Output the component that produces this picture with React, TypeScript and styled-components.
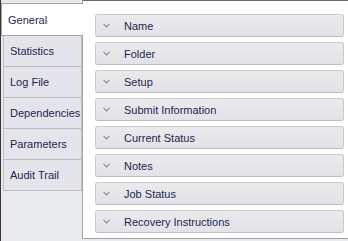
import React from 'react';
import styled, { createGlobalStyle } from 'styled-components';

const GlobalStyle = createGlobalStyle`
  html, body {
    margin: 0;
    padding: 0;
    background: #e9eaee;
    font-family: "Liberation Sans", Arial, sans-serif;
  }
`;

const Window = styled.div`
  display: flex;
  height: 241px;
  width: 348px;
  border-left: 1px solid #3e3434;
  box-sizing: border-box;
  overflow: hidden;
`;

const TabStrip = styled.div`
  width: 81px;
  padding-top: 3px;
  display: flex;
  flex-direction: column;
  flex-shrink: 0;
`;

const Tab = styled.div<{ $active?: boolean }>`
  position: relative;
  box-sizing: border-box;
  height: ${p => (p.$active ? 33 : 31)}px;
  margin-left: ${p => (p.$active ? 0 : 2)}px;
  margin-right: ${p => (p.$active ? -1 : 0)}px;
  padding-left: 6px;
  display: flex;
  align-items: center;
  background: ${p => (p.$active ? '#ffffff' : '#e4e5ea')};
  border: 1px solid ${p => (p.$active ? '#a3a3a8' : '#bdbdc3')};
  border-right: ${p => (p.$active ? 'none' : '1px solid #bdbdc3')};
  border-top: ${p => (p.$active ? '1px solid #a3a3a8' : 'none')};
  z-index: ${p => (p.$active ? 2 : 1)};
  font-size: 11px;
  color: #1e1f52;
  cursor: default;
`;

const Panel = styled.div`
  flex: 1;
  height: 239px;
  box-sizing: border-box;
  background: #ffffff;
  border-top: 1px solid #6e6e6e;
  border-left: 1px solid #a3a3a8;
  border-bottom: 1px solid #a3a3a8;
  padding: 13px 4px 0 12px;
  display: flex;
  flex-direction: column;
  gap: 5px;
`;

const GroupHeader = styled.div`
  height: 23px;
  box-sizing: border-box;
  display: flex;
  align-items: center;
  background: linear-gradient(#ebebee, #e3e3e7);
  border: 1px solid #cacace;
  border-bottom-color: #bdbdc2;
  border-radius: 3px;
  padding-left: 7px;
  font-size: 11px;
  color: #1e1f52;
`;

const Chevron = styled.svg`
  width: 7px;
  height: 5px;
  margin-right: 14px;
  flex-shrink: 0;
`;

const tabs = ['General', 'Statistics', 'Log File', 'Dependencies', 'Parameters', 'Audit Trail'];
const groups = [
  'Name',
  'Folder',
  'Setup',
  'Submit Information',
  'Current Status',
  'Notes',
  'Job Status',
  'Recovery Instructions',
];

const App: React.FC = () => {
  return (
    <>
      <GlobalStyle />
      <Window>
        <TabStrip>
          {tabs.map((t, i) => (
            <Tab key={t} $active={i === 0}>
              {t}
            </Tab>
          ))}
        </TabStrip>
        <Panel>
          {groups.map(g => (
            <GroupHeader key={g}>
              <Chevron viewBox="0 0 7 5">
                <path d="M0.5 0.8 L3.5 3.8 L6.5 0.8" fill="none" stroke="#8c8c90" strokeWidth="1.2" />
              </Chevron>
              {g}
            </GroupHeader>
          ))}
        </Panel>
      </Window>
    </>
  );
};

export default App;
